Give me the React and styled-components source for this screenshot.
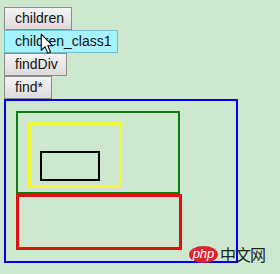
import React from 'react';
import styled, { createGlobalStyle } from 'styled-components';

const Global = createGlobalStyle`
  html, body {
    margin: 0;
    padding: 0;
    background: #cde8cf;
    font-family: Arial, "Liberation Sans", sans-serif;
  }
`;

const Page = styled.div`
  position: relative;
  width: 280px;
  height: 274px;
  padding: 7px 4px 0;
  box-sizing: border-box;
  overflow: hidden;
`;

const Buttons = styled.div`
  display: flex;
  flex-direction: column;
  align-items: flex-start;
`;

const Btn = styled.button`
  height: 23px;
  padding: 0 10px;
  font-family: "Liberation Sans", Arial, sans-serif;
  font-size: 14px;
  color: #111;
  border: 1px solid ${(p) => (p.$active ? '#5fc7dd' : '#8c8c8c')};
  background: ${(p) =>
    p.$active ? '#a6f2ff' : 'linear-gradient(#f4f4f4, #dcdcdc)'};
  border-radius: 0;
  box-sizing: border-box;
  line-height: 21px;
  cursor: default;
  width: ${(p) => p.$w}px;
  text-align: left;
`;

const Box = styled.div`
  box-sizing: border-box;
  width: ${(p) => p.$w}px;
  height: ${(p) => p.$h}px;
  border: ${(p) => p.$b || 2}px solid ${(p) => p.$c};
  padding: ${(p) => p.$pad || '0'};
`;

const Cursor = styled.svg`
  position: absolute;
  left: 40px;
  top: 33px;
`;

const Watermark = styled.div`
  position: absolute;
  left: 189px;
  top: 246px;
  display: flex;
  align-items: center;
  gap: 2px;
`;

const Php = styled.span`
  display: inline-block;
  width: 29px;
  height: 17px;
  border-radius: 50%;
  background: #e3222f;
  color: #fff;
  font-style: italic;
  font-size: 13px;
  line-height: 16px;
  text-align: center;
  font-family: "Liberation Sans", Arial, sans-serif;
`;

const Cn = styled.span`
  font-family: "Noto Sans CJK SC", sans-serif;
  font-size: 16px;
  line-height: 17px;
  color: #222;
  letter-spacing: -1px;
`;

export default function App() {
  return (
    <>
      <Global />
      <Page>
        <Buttons>
          <Btn $w={68}>children</Btn>
          <Btn $w={114} $active>children_class1</Btn>
          <Btn $w={63}>findDiv</Btn>
          <Btn $w={48}>find*</Btn>
        </Buttons>
        <Box $w={234} $h={164} $c="#0000e0" $pad="10px 10px">
          <Box $w={164} $h={83} $c="#0a7d0a" $pad="9px 10px">
            <Box $w={94} $h={66} $c="#f5f53a" $b={3} $pad="26px 9px">
              <Box $w={60} $h={30} $c="#000" />
            </Box>
          </Box>
          <Box $w={166} $h={56} $c="#e01010" $b={3} />
        </Box>
        <Cursor width="14" height="22" viewBox="0 0 13 21">
          <path d="M1 1 L1 16.5 L4.6 13 L7.2 19.2 L9.8 18.1 L7.3 12.2 L12 12.2 Z" fill="#fff" stroke="#000" strokeWidth="1" strokeLinejoin="round" />
        </Cursor>
        <Watermark>
          <Php>php</Php>
          <Cn>中文网</Cn>
        </Watermark>
      </Page>
    </>
  );
}
